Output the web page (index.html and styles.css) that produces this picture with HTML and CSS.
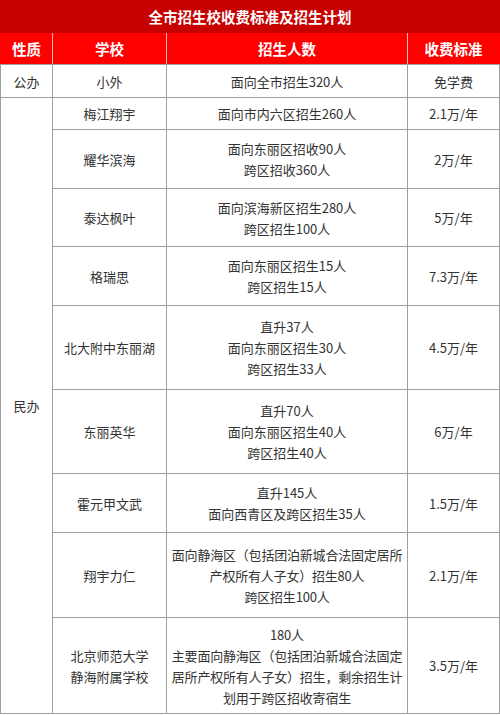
FILE: index.html
```html
<!DOCTYPE html>
<html lang="zh">
<head>
<meta charset="utf-8">
<link rel="stylesheet" href="styles.css">
</head>
<body>
<table class="plan">
  <colgroup>
    <col class="c1"><col class="c2"><col class="c3"><col class="c4">
  </colgroup>
  <thead>
    <tr class="title"><th colspan="4">全市招生校收费标准及招生计划</th></tr>
    <tr class="head"><th>性质</th><th>学校</th><th>招生人数</th><th>收费标准</th></tr>
  </thead>
  <tbody>
    <tr class="h33"><td>公办</td><td>小外</td><td>面向全市招生320人</td><td>免学费</td></tr>
    <tr class="h32"><td rowspan="11">民办</td><td>梅江翔宇</td><td>面向市内六区招生260人</td><td>2.1万/年</td></tr>
    <tr class="h59"><td>耀华滨海</td><td>面向东丽区招收90人<br>跨区招收360人</td><td>2万/年</td></tr>
    <tr class="h58"><td>泰达枫叶</td><td>面向滨海新区招生280人<br>跨区招生100人</td><td>5万/年</td></tr>
    <tr class="h59"><td>格瑞思</td><td>面向东丽区招生15人<br>跨区招生15人</td><td>7.3万/年</td></tr>
    <tr class="h84"><td>北大附中东丽湖</td><td>直升37人<br>面向东丽区招生30人<br>跨区招生33人</td><td>4.5万/年</td></tr>
    <tr class="h84"><td>东丽英华</td><td>直升70人<br>面向东丽区招生40人<br>跨区招生40人</td><td>6万/年</td></tr>
    <tr class="h59"><td>霍元甲文武</td><td>直升145人<br>面向西青区及跨区招生35人</td><td>1.5万/年</td></tr>
    <tr class="h85"><td>翔宇力仁</td><td class="long">面向静海区（包括团泊新城合法固定居所<br>产权所有人子女）招生80人<br>跨区招生100人</td><td>2.1万/年</td></tr>
    <tr class="h96"><td>北京师范大学<br>静海附属学校</td><td class="long">180人<br>主要面向静海区（包括团泊新城合法固定<br>居所产权所有人子女）招生，剩余招生计<br>划用于跨区招收寄宿生</td><td>3.5万/年</td></tr>
  </tbody>
</table>
</body>
</html>
```
FILE: styles.css
```css
html, body {
  margin: 0;
  padding: 0;
  background: #ffffff;
}
body {
  font-family: "Noto Sans CJK SC", "Microsoft YaHei", "Noto Sans", sans-serif;
  color: #333333;
}
.plan {
  width: 499px;
  border-collapse: collapse;
  table-layout: fixed;
}
.c1 { width: 52px; }
.c2 { width: 114px; }
.c3 { width: 241px; }
.c4 { width: 92px; }

.plan th {
  color: #ffffff;
  font-weight: bold;
  font-size: 14.5px;
  line-height: 20px;
  text-align: center;
  vertical-align: middle;
  padding: 0;
}
.title th {
  height: 31px;
  background: #c70000;
  border: 1px solid #c70000;
}
.head th {
  height: 31px;
  background: #fe0000;
  border: 1px solid #f8b8b8;
  border-top-color: #fe0000;
  border-bottom-color: #a0a0a0;
}
.head th:first-child { border-left-color: #fe0000; }
.head th:last-child { border-right-color: #fe0000; }

.plan td {
  border: 1px solid #a0a0a0;
  font-size: 13px;
  line-height: 21px;
  text-align: center;
  vertical-align: middle;
  padding: 0 2px;
  white-space: nowrap;
}
.plan td.long {
  padding: 0;
  letter-spacing: -0.2px;
}
.h32 td { height: 31px; }
.h33 td { height: 32px; }
.h58 td { height: 57px; }
.h59 td { height: 58px; }
.h84 td { height: 83px; }
.h85 td { height: 84px; }
.h96 td { height: 95px; }
```
